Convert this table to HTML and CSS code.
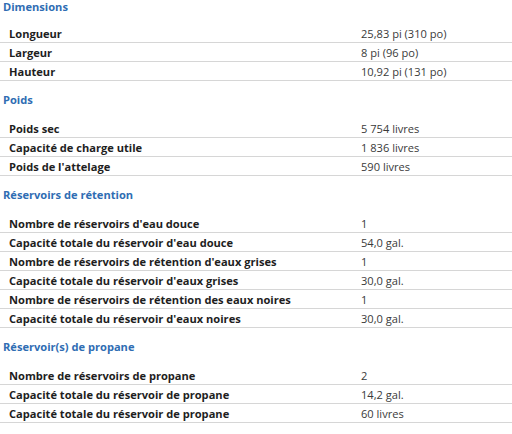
FILE: index.html
```html
<!DOCTYPE html>
<html lang="fr">
<head>
<meta charset="utf-8">
<link rel="stylesheet" href="styles.css">
</head>
<body>
<section class="group">
  <h2 class="group-title">Dimensions</h2>
  <div class="row"><span class="label">Longueur</span><span class="value">25,83 pi (310 po)</span></div>
  <div class="row"><span class="label">Largeur</span><span class="value">8 pi (96 po)</span></div>
  <div class="row"><span class="label">Hauteur</span><span class="value">10,92 pi (131 po)</span></div>
</section>
<section class="group">
  <h2 class="group-title">Poids</h2>
  <div class="row"><span class="label">Poids sec</span><span class="value">5 754 livres</span></div>
  <div class="row"><span class="label">Capacité de charge utile</span><span class="value">1 836 livres</span></div>
  <div class="row"><span class="label">Poids de l'attelage</span><span class="value">590 livres</span></div>
</section>
<section class="group">
  <h2 class="group-title">Réservoirs de rétention</h2>
  <div class="row"><span class="label">Nombre de réservoirs d'eau douce</span><span class="value">1</span></div>
  <div class="row"><span class="label">Capacité totale du réservoir d'eau douce</span><span class="value">54,0 gal.</span></div>
  <div class="row"><span class="label">Nombre de réservoirs de rétention d'eaux grises</span><span class="value">1</span></div>
  <div class="row"><span class="label">Capacité totale du réservoir d'eaux grises</span><span class="value">30,0 gal.</span></div>
  <div class="row"><span class="label">Nombre de réservoirs de rétention des eaux noires</span><span class="value">1</span></div>
  <div class="row"><span class="label">Capacité totale du réservoir d'eaux noires</span><span class="value">30,0 gal.</span></div>
</section>
<section class="group">
  <h2 class="group-title">Réservoir(s) de propane</h2>
  <div class="row"><span class="label">Nombre de réservoirs de propane</span><span class="value">2</span></div>
  <div class="row"><span class="label">Capacité totale du réservoir de propane</span><span class="value">14,2 gal.</span></div>
  <div class="row"><span class="label">Capacité totale du réservoir de propane</span><span class="value">60 livres</span></div>
</section>
</body>
</html>
```

FILE: styles.css
```css
html, body {
  margin: 0;
  padding: 0;
  background: #ffffff;
}
body {
  font-family: "Open Sans", "Noto Sans", sans-serif;
  font-size: 11.1px;
  color: #222222;
}
.group {
  margin-top: 12px;
}
.group:first-child {
  margin-top: 0;
}
.group-title {
  margin: 0 0 12px 0;
  padding-left: 3px;
  font-size: 11.1px;
  line-height: 14px;
  font-weight: 700;
  color: #2f6db3;
}
.group:first-child .group-title {
  margin-bottom: 10px;
}
.row {
  display: grid;
  grid-template-columns: 361px 1fr;
  height: 18px;
  align-items: center;
  border-bottom: 1px solid #d6d6d6;
}
.label {
  padding-left: 9px;
  font-weight: 700;
  color: #1e1e1e;
  white-space: nowrap;
}
.value {
  color: #3a3a3a;
  white-space: nowrap;
}
```
